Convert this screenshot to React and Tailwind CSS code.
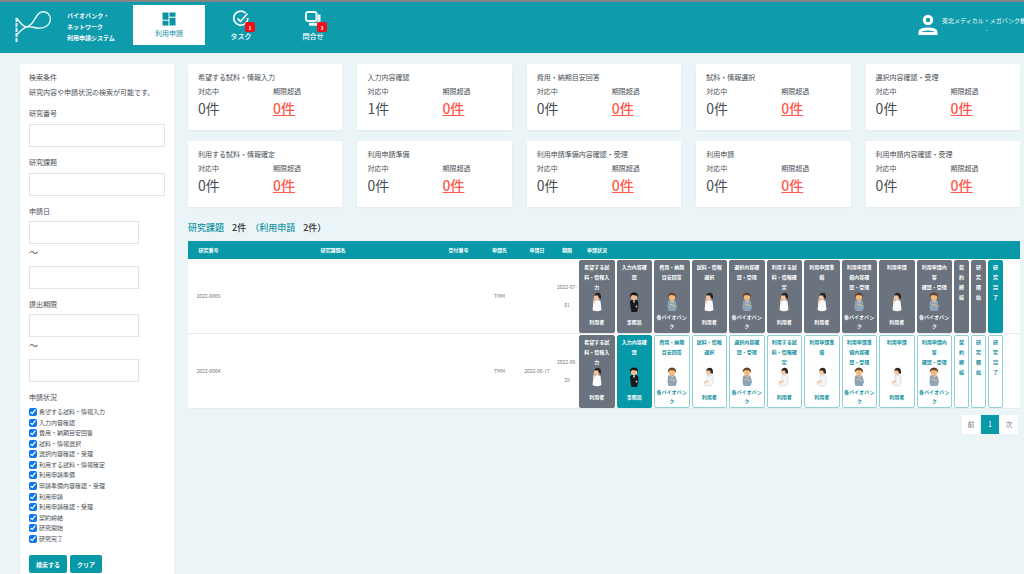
import clsx from "clsx";

const steps = [
  { title: "希望する試\n料・情報入\n力", role: "user" },
  { title: "入力内容確\n認", role: "office" },
  { title: "費用・納期\n目安回答", role: "bank" },
  { title: "試料・情報\n選択", role: "user" },
  { title: "選択内容確\n認・受理", role: "bank" },
  { title: "利用する試\n料・情報確\n定", role: "user" },
  { title: "利用申請準\n備", role: "user" },
  { title: "利用申請準\n備内容確\n認・受理", role: "bank" },
  { title: "利用申請", role: "user" },
  { title: "利用申請内\n容\n確認・受理", role: "bank" },
  { title: "契\n約\n締\n結" },
  { title: "研\n究\n開\n始" },
  { title: "研\n究\n完\n了" },
];

const roleNames = {
  user: "利用者",
  office: "事務局",
  bank: "各バイオバン\nク",
};

// current : 現在のステップの番号
const rows = [
  { no: "2022-0009", dest: "TMM", date: "", limit: "2022-07-\n01", current: 12 },
  { no: "2022-0004", dest: "TMM", date: "2022-06-17", limit: "2022-06-\n28", current: 1 },
];

const cards = [
  { title: "希望する試料・情報入力", count: 0 },
  { title: "入力内容確認", count: 1 },
  { title: "費用・納期目安回答", count: 0 },
  { title: "試料・情報選択", count: 0 },
  { title: "選択内容確認・受理", count: 0 },
  { title: "利用する試料・情報確定", count: 0 },
  { title: "利用申請準備", count: 0 },
  { title: "利用申請準備内容確認・受理", count: 0 },
  { title: "利用申請", count: 0 },
  { title: "利用申請内容確認・受理", count: 0 },
];

const statuses = [
  "希望する試料・情報入力",
  "入力内容確認",
  "費用・納期目安回答",
  "試料・情報選択",
  "選択内容確認・受理",
  "利用する試料・情報確定",
  "利用申請準備",
  "申請準備内容確認・受理",
  "利用申請",
  "利用申請確認・受理",
  "契約締結",
  "研究開始",
  "研究完了",
];

const Logo = () => (
  <svg viewBox="0 0 38 34" className="h-[34px] w-[38px] shrink-0" fill="none" stroke="#e4f5f6" strokeWidth="1.5">
    <path d="M2.5 8C5 11 8 16 12 17C18 16 20 10 23 5.500C26 1 31 0.800 34 3.500C37.500 7 37 12.500 33.500 15.500C29 19 23 18.500 18 17C13 16 10 17 2.500 25" />
    <path d="M2.500 8V33" strokeWidth="2" strokeDasharray="4 1" />
  </svg>
);

const DashboardIcon = () => (
  <svg viewBox="0 0 14 14" className="size-[14px]" fill="#0b93a4">
    <path d="M0.500 0.500h6v7.300H0.500zM7.500 0.500H13.500v4.200H7.500zM0.500 8.800h6v4.700H0.500zM7.500 5.700H13.500v7.800H7.500z" />
  </svg>
);

const TaskIcon = () => (
  <svg viewBox="0 0 18 18" className="size-[18px]" fill="none" stroke="#e9f7f8" strokeWidth="1.800">
    <path d="M13.500 3A7 7 0 1 0 15.800 8" />
    <path d="M5.500 8.500L8.500 11.500L15.500 3.500" />
  </svg>
);

const InquiryIcon = () => (
  <svg viewBox="0 0 18 18" className="size-[18px]" fill="none" stroke="#e9f7f8" strokeWidth="2">
    <rect x="2" y="2" width="10.500" height="9" rx="2" />
    <path d="M15 4.500V12.500C15 13.500 14.500 14.200 13 14.200H5" strokeWidth="3" />
  </svg>
);

const UserIcon = () => (
  <svg viewBox="0 0 20 22" className="h-[22px] w-5 shrink-0" fill="none" stroke="#fff" strokeWidth="3">
    <circle cx="10" cy="6" r="3.700" />
    <path d="M2 19.500V18C2 14 18 14 18 18V19.500Z" />
  </svg>
);

const Figure = ({ role, seated }) => {
  if (role === "office") {
    return (
      <svg viewBox="0 0 14 20" className="h-5 w-[14px]">
        <path d="M3 9Q7 6 11 9L11.500 14L10 20H4.500L3.500 15Z" fill="#15181c" />
        <path d="M6 8.500L7 11.500L8 8.500Z" fill="#fff" />
        <circle cx="7" cy="5" r="3.200" fill="#f0bd93" />
        <path d="M3 5.500Q2.500 0.500 7 0.500Q11.500 0.500 11 5.500L9.500 3.500L5 3Z" fill="#17130f" />
        <circle cx="9.500" cy="14.500" r="1" fill="#f0bd93" />
      </svg>
    );
  }
  if (role === "bank") {
    return (
      <svg viewBox="0 0 14 20" className="h-5 w-[14px]">
        <path d="M3 9Q7 6.500 10.500 9L12 15L10.500 19H3.500L2.500 15Z" fill="#8da5b8" />
        <path d="M5 12L10 14M5.500 8L7.500 10L9 8" stroke="#e8bd8e" strokeWidth="1.200" fill="none" />
        <circle cx="7" cy="5" r="3.200" fill="#f5b875" />
        <path d="M2.800 5.500Q2.500 0.800 7 0.600Q11.500 0.800 11.200 6L9.500 3.500L5 3Z" fill="#624332" />
      </svg>
    );
  }
  return (
    <svg viewBox="0 0 14 20" className="h-5 w-[14px]">
      {seated ? (
        <path d="M5 8.500Q8 7 10.500 9L11.500 14L9.500 19H4L1.500 17L5 15Z" fill="#f4f5f6" stroke="#cfd4d8" strokeWidth="0.600" />
      ) : (
        <path d="M3.500 9.500Q7.500 7 10.500 9L11.500 18Q7 20.500 2.500 18Z" fill="#fafafa" />
      )}
      <path d={seated ? "M2 15.500L6.500 14" : "M3.500 11L4.500 6.500"} stroke="#efc19e" strokeWidth="1.500" />
      <circle cx="7" cy="5" r="3" fill="#f4c6a2" />
      <path d="M4 3.500Q5 0.500 8 0.700Q11.800 1.200 10.800 7L8.800 6L8 3.500Z" fill="#2c2421" />
    </svg>
  );
};

const NavItem = ({ icon, label, badge }) => (
  <a href="#" className="flex w-[72px] flex-col items-center pt-2">
    <span className="relative">
      {icon}
      <span className="absolute top-3 left-[13px] flex size-[10px] items-center justify-center rounded-xs bg-[#f20d18] text-[5px] leading-none font-bold text-white">
        {badge}
      </span>
    </span>
    <span className="mt-[3px] text-[7px] leading-[10px] font-medium">{label}</span>
  </a>
);

const Field = ({ id, label }) => (
  <div>
    <label htmlFor={id} className="block text-[7px] leading-3">
      {label}
    </label>
    <input id={id} type="text" className="mt-[5px] block h-[23px] w-full border border-[#e3e3e3] bg-white px-2 text-[7px]" />
  </div>
);

const RangeField = ({ id, label }) => (
  <fieldset>
    <legend className="block text-[7px] leading-3">{label}</legend>
    <input
      type="text"
      aria-label={`${label} 開始`}
      name={`${id}From`}
      className="mt-1 block h-[23px] w-[110px] border border-[#e3e3e3] bg-white px-2 text-[7px]"
    />
    <p className="pb-1 text-[9px] leading-[18px]">～</p>
    <input
      type="text"
      aria-label={`${label} 終了`}
      name={`${id}To`}
      className="block h-[23px] w-[110px] border border-[#e3e3e3] bg-white px-2 text-[7px]"
    />
  </fieldset>
);

const Sidebar = () => (
  <aside className="w-[154px] shrink-0 bg-white px-[9px] pt-[7px] pb-4 shadow-xs">
    <form>
      <h2 className="text-[7px] leading-3">検索条件</h2>
      <p className="mt-[2px] text-[7px] leading-[14px] whitespace-nowrap">研究内容や申請状況の検索が可能です。</p>
      <div className="mt-2 flex flex-col gap-[9px]">
        <Field id="researchNo" label="研究番号" />
        <Field id="researchTitle" label="研究課題" />
        <RangeField id="applied" label="申請日" />
        <RangeField id="deadline" label="提出期限" />
        <fieldset>
          <legend className="block text-[7px] leading-3">申請状況</legend>
          <div className="mt-1 flex h-[137px] flex-col justify-between">
            {statuses.map((status) => (
              <label key={status} className="flex items-center gap-[2px] text-[6px] leading-[10px]">
                <input type="checkbox" defaultChecked className="size-2 accent-[#0b76ef]" />
                {status}
              </label>
            ))}
          </div>
        </fieldset>
      </div>
      <div className="mt-[11px] flex gap-[3px]">
        <button type="button" className="h-[18px] w-[38px] rounded-xs bg-[#0899a8] text-[6px] font-bold text-white">
          検索する
        </button>
        <button type="button" className="h-[18px] w-8 rounded-xs bg-[#0899a8] text-[6px] font-bold text-white">
          クリア
        </button>
      </div>
    </form>
  </aside>
);

const Card = ({ title, count }) => (
  <section className="h-[66px] bg-white px-[10px] pt-[7px] shadow-xs">
    <h3 className="text-[7px] leading-3 whitespace-nowrap">{title}</h3>
    <div className="mt-[2px] flex">
      <div className="w-[75px]">
        <p className="text-[7px] leading-3">対応中</p>
        <p className="mt-px text-[14px] leading-5">{count}件</p>
      </div>
      <div>
        <p className="text-[7px] leading-3">期限超過</p>
        <a href="#" className="mt-px block text-[14px] leading-5 font-medium text-[#ff5a4d] underline">
          0件
        </a>
      </div>
    </div>
  </section>
);

const Step = ({ step, index, current }) => (
  <li
    className={clsx(
      "flex h-[73px] flex-col items-center rounded-xs border pt-px text-center text-[5px] whitespace-pre",
      step.role ? "min-w-0 flex-1" : "w-[15px] shrink-0",
      index < current && "border-[#6a737e] bg-[#6a737e] text-white",
      index === current && "border-[#0899a8] bg-[#0899a8] text-white",
      index > current && "border-[#8fd1d7] bg-white text-[#0e8f9e]"
    )}
  >
    <p className="min-h-[30px] leading-[10px] font-bold">{step.title}</p>
    {step.role && (
      <>
        <Figure role={step.role} seated={index > current} />
        <p className="flex h-[18px] items-center leading-[9px] font-bold">{roleNames[step.role]}</p>
      </>
    )}
  </li>
);

const ResearchTable = () => (
  <table className="mt-[6px] w-full table-fixed border-collapse text-center text-[5px]">
    <colgroup>
      <col className="w-[41px]" />
      <col />
      <col className="w-[43px]" />
      <col className="w-[39px]" />
      <col className="w-[36px]" />
      <col className="w-[24px]" />
      <col className="w-[441px]" />
    </colgroup>
    <thead className="h-[18px] bg-[#0899a8] text-white">
      <tr>
        <th>研究番号</th>
        <th>研究課題名</th>
        <th>受付番号</th>
        <th>申請先</th>
        <th>申請日</th>
        <th>期限</th>
        <th className="pl-2 text-left">申請状況</th>
      </tr>
    </thead>
    <tbody className="bg-white text-[#777]">
      {rows.map((row) => (
        <tr key={row.no} className="border-b border-[#e8eced]">
          <td>{row.no}</td>
          <td></td>
          <td></td>
          <td>{row.dest}</td>
          <td>{row.date}</td>
          <td className="leading-[18px] whitespace-pre">{row.limit}</td>
          <td className="pt-px pr-[17px]">
            <ol className="flex gap-[2px]">
              {steps.map((step, index) => (
                <Step key={index} step={step} index={index} current={row.current} />
              ))}
            </ol>
          </td>
        </tr>
      ))}
    </tbody>
  </table>
);

const App = () => {
  return (
    <div
      lang="ja"
      className="h-screen overflow-hidden bg-[#ebf4f7] font-['Noto_Sans_CJK_JP',sans-serif] text-[#4a4f55]"
    >
      <header className="flex h-[53px] overflow-hidden border-t-2 border-[#858585] bg-[#0e9bac] pl-[14px] text-white">
        <div className="flex w-[119px] items-start gap-[15px] pt-2">
          <Logo />
          <p className="text-[6px] leading-[11px] font-bold whitespace-nowrap">
            バイオバンク・
            <br />
            ネットワーク
            <br />
            利用申請システム
          </p>
        </div>
        <nav className="flex">
          <a href="#" className="mt-[3px] flex h-10 w-[72px] flex-col items-center bg-white pt-[7px] text-[#0e8f9e]">
            <DashboardIcon />
            <span className="mt-[2px] text-[7px] leading-[10px]">利用申請</span>
          </a>
          <NavItem icon={<TaskIcon />} label="タスク" badge="1" />
          <NavItem icon={<InquiryIcon />} label="問合せ" badge="3" />
        </nav>
        <a href="#" className="-mr-2 ml-auto flex items-start gap-1 pt-3">
          <UserIcon />
          <span className="mt-[2px] text-center text-[6px] leading-[9px] whitespace-nowrap">
            東北メディカル・メガバンク機構
            <br />-
          </span>
        </a>
      </header>
      <div className="flex gap-[14px] pt-[11px] pr-1 pl-5">
        <Sidebar />
        <main className="min-w-0 flex-1">
          <div className="grid grid-cols-5 gap-x-[15px] gap-y-[11px]">
            {cards.map((card) => (
              <Card key={card.title} {...card} />
            ))}
          </div>
          <h2 className="mt-[14px] flex text-[9px] leading-[14px] font-medium text-[#333]">
            <span className="text-[#1596a4]">研究課題</span>
            <span className="ml-2">2件</span>
            <span className="ml-1 text-[#1596a4]">（利用申請</span>
            <span className="ml-2">2件）</span>
          </h2>
          <ResearchTable />
          <nav className="mt-[6px] flex justify-end gap-px pr-[2px] text-[7px] text-[#777]">
            <button type="button" className="h-[19px] w-[18px] bg-white">
              前
            </button>
            <button type="button" className="h-[19px] w-[18px] bg-[#0899a8] text-white">
              1
            </button>
            <button type="button" className="h-[19px] w-[18px] bg-white">
              次
            </button>
          </nav>
        </main>
      </div>
    </div>
  );
};

export default App;
